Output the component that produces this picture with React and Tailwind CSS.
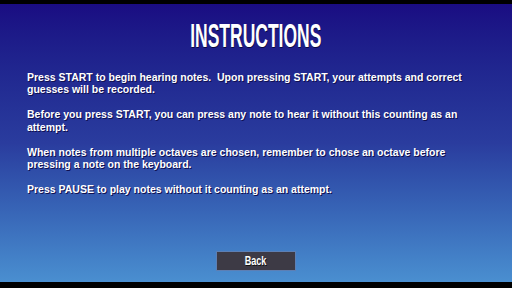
export default function App() {
  const paragraphs = [
    "Press START to begin hearing notes.\u00a0 Upon pressing START, your attempts and correct guesses will be recorded.",
    "Before you press START, you can press any note to hear it without this counting as an attempt.",
    "When notes from multiple octaves are chosen, remember to chose an octave before pressing a note on the keyboard.",
    "Press PAUSE to play notes without it counting as an attempt.",
  ];

  return (
    <div className="w-[512px] h-[288px] bg-black flex flex-col overflow-hidden">
      <div className="mt-[4px] h-[278px] flex flex-col items-center bg-gradient-to-b from-[#1a0c82] via-[#2a3c9e] to-[#4a8fd0]">
        <h1
          className="mt-[18px] text-white font-bold text-[33px] leading-[28px] scale-x-[0.53] origin-center whitespace-nowrap [text-shadow:1px_1px_0_#0a0a40]"
          style={{ fontFamily: '"Liberation Sans", Arial, sans-serif' }}
        >
          INSTRUCTIONS
        </h1>

        <div
          className="mt-[20.5px] w-full pl-[27px] pr-[36px] flex flex-col gap-[12.5px] text-white font-bold text-[10.5px] leading-[12.5px] [text-shadow:1px_1px_0_#101050]"
          style={{ fontFamily: '"Liberation Sans", Arial, sans-serif' }}
        >
          {paragraphs.map((p, i) => (
            <p key={i}>{p}</p>
          ))}
        </div>

        <div className="flex-1" />

        <button
          className="mb-[11px] w-[80px] h-[20px] bg-[#3d3a45] border border-[#5d7fb4] flex items-center justify-center"
        >
          <span
            className="text-white font-bold text-[13px] scale-x-[0.7] [text-shadow:1px_1px_0_#111]"
            style={{ fontFamily: '"Liberation Sans", Arial, sans-serif' }}
          >
            Back
          </span>
        </button>
      </div>
    </div>
  );
}
